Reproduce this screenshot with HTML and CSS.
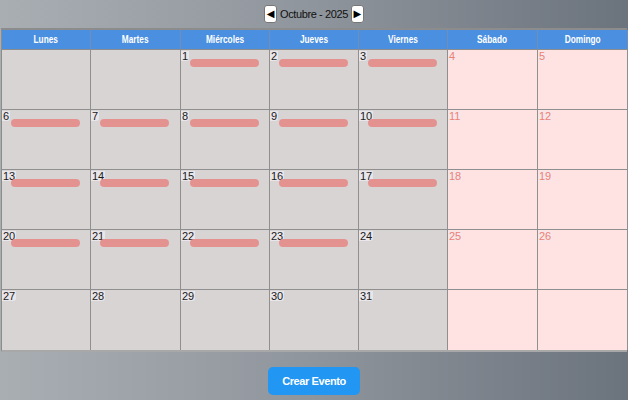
FILE: index.html
```html
<!DOCTYPE html>
<html lang="es">
<head>
<meta charset="utf-8">
<link rel="stylesheet" href="styles.css">
</head>
<body>
<div class="page">
  <div class="nav">
    <button class="navbtn">&#9664;</button>
    <span class="month">Octubre - 2025</span>
    <button class="navbtn">&#9654;</button>
  </div>
  <div class="cal">
    <div class="hd"><span>Lunes</span></div><div class="hd"><span>Martes</span></div><div class="hd"><span>Miércoles</span></div><div class="hd"><span>Jueves</span></div><div class="hd"><span>Viernes</span></div><div class="hd"><span>Sábado</span></div><div class="hd"><span>Domingo</span></div>

    <div class="cell"></div>
    <div class="cell"></div>
    <div class="cell"><span class="num">1</span><div class="ev"></div></div>
    <div class="cell"><span class="num">2</span><div class="ev"></div></div>
    <div class="cell"><span class="num">3</span><div class="ev"></div></div>
    <div class="cell we"><span class="num">4</span></div>
    <div class="cell we"><span class="num">5</span></div>

    <div class="cell"><span class="num">6</span><div class="ev"></div></div>
    <div class="cell"><span class="num">7</span><div class="ev"></div></div>
    <div class="cell"><span class="num">8</span><div class="ev"></div></div>
    <div class="cell"><span class="num">9</span><div class="ev"></div></div>
    <div class="cell"><span class="num">10</span><div class="ev"></div></div>
    <div class="cell we"><span class="num">11</span></div>
    <div class="cell we"><span class="num">12</span></div>

    <div class="cell"><span class="num">13</span><div class="ev"></div></div>
    <div class="cell"><span class="num">14</span><div class="ev"></div></div>
    <div class="cell"><span class="num">15</span><div class="ev"></div></div>
    <div class="cell"><span class="num">16</span><div class="ev"></div></div>
    <div class="cell"><span class="num">17</span><div class="ev"></div></div>
    <div class="cell we"><span class="num">18</span></div>
    <div class="cell we"><span class="num">19</span></div>

    <div class="cell"><span class="num">20</span><div class="ev"></div></div>
    <div class="cell"><span class="num">21</span><div class="ev"></div></div>
    <div class="cell"><span class="num">22</span><div class="ev"></div></div>
    <div class="cell"><span class="num">23</span><div class="ev"></div></div>
    <div class="cell"><span class="num">24</span></div>
    <div class="cell we"><span class="num">25</span></div>
    <div class="cell we"><span class="num">26</span></div>

    <div class="cell"><span class="num">27</span></div>
    <div class="cell"><span class="num">28</span></div>
    <div class="cell"><span class="num">29</span></div>
    <div class="cell"><span class="num">30</span></div>
    <div class="cell"><span class="num">31</span></div>
    <div class="cell we"></div>
    <div class="cell we"></div>
  </div>
  <div class="actions">
    <button class="create">Crear Evento</button>
  </div>
</div>
</body>
</html>
```
FILE: styles.css
```css
html, body {
  margin: 0;
  padding: 0;
  height: 100%;
}
body {
  background: linear-gradient(90deg, #a9aeb3 0%, #8f959c 50%, #6b737d 100%);
  font-family: "Liberation Sans", Arial, sans-serif;
  overflow: hidden;
}
.page {
  display: flex;
  flex-direction: column;
  align-items: center;
  padding: 5px 1px 0 1px;
}
.nav {
  display: flex;
  align-items: center;
  gap: 3px;
  height: 18px;
  margin-bottom: 5px;
}
.navbtn {
  width: 13px;
  height: 18px;
  padding: 0;
  border: 1px solid #777;
  border-radius: 3px;
  background: #fff;
  color: #000;
  font-size: 10px;
  line-height: 16px;
  font-family: "DejaVu Sans", sans-serif;
}
.month {
  font-size: 11px;
  letter-spacing: -0.4px;
  color: #111;
}
.cal {
  width: 626px;
  display: grid;
  grid-template-columns: 89px 90px 89px 89px 89px 90px 90px;
  grid-template-rows: 20px repeat(5, 60px);
  border-top: 2px solid #8c8c8c;
  border-left: 1px solid #8c8c8c;
  box-sizing: border-box;
  border-bottom: 2px solid #a8a8a8;
}
.hd {
  background: #4a8fe0;
  color: #fff;
  font-weight: bold;
  font-size: 10px;
  display: flex;
  align-items: center;
  justify-content: center;
  border-right: 1px solid #6f8fb8;
  border-bottom: 1px solid #8c8c8c;
}
.hd span {
  display: inline-block;
  transform: scaleX(0.83);
}
.cell {
  background: #d8d4d3;
  border-right: 1px solid #8f8f8f;
  border-bottom: 1px solid #8f8f8f;
  display: flex;
  flex-direction: column;
  align-items: flex-start;
}
.cal .cell:nth-last-child(-n+7) {
  border-bottom: none;
}
.cell.we {
  background: #ffe3e3;
}
.num {
  display: block;
  font-size: 11px;
  line-height: 10px;
  height: 10px;
  padding: 0 1px;
  margin-top: 1px;
  color: #1a1a1a;
  background: #e8e6ea;
  border-radius: 0 0 3px 0;
}
.we .num {
  color: #ef7f74;
  background: #f6e6e8;
}
.ev {
  margin-left: 9px;
  width: 69px;
  height: 8px;
  margin-top: -2px;
  border-radius: 4px;
  background: #e49290;
}
.actions {
  margin-top: 15px;
  display: flex;
  justify-content: center;
}
.create {
  width: 92px;
  height: 28px;
  border: none;
  border-radius: 5px;
  background: #2196f3;
  color: #fff;
  font-weight: bold;
  font-size: 11px;
  letter-spacing: -0.4px;
  font-family: "Liberation Sans", Arial, sans-serif;
}
```
